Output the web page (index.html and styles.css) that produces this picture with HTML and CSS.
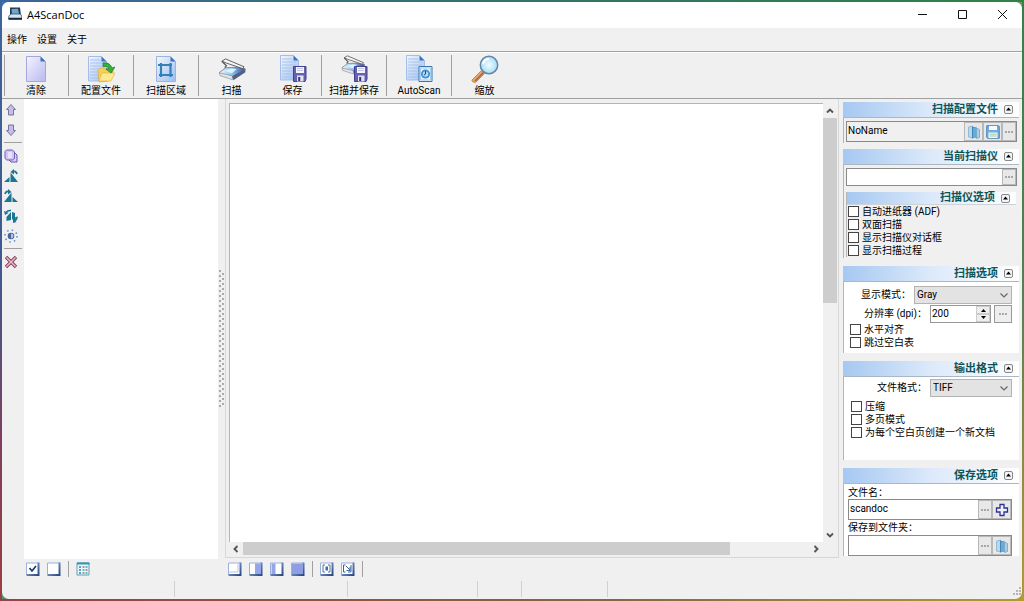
FILE: index.html
```html
<!DOCTYPE html>
<html lang="zh-CN">
<head>
<meta charset="utf-8">
<title>A4ScanDoc</title>
<link rel="stylesheet" href="styles.css">
</head>
<body>
<svg class="defs" aria-hidden="true">
  <defs>
    <linearGradient id="paper" x1="0" y1="0" x2="1" y2="1"><stop offset="0" stop-color="#f4f4ff"/><stop offset="1" stop-color="#b9b9f0"/></linearGradient>
    <linearGradient id="bluepaper" x1="0" y1="0" x2="1" y2="1"><stop offset="0" stop-color="#f3f7ff"/><stop offset="1" stop-color="#9cbdf0"/></linearGradient>
    <linearGradient id="glass" x1="0" y1="0" x2="1" y2="0"><stop offset="0" stop-color="#f5f7fa"/><stop offset=".45" stop-color="#8bcbee"/><stop offset="1" stop-color="#3d4e96"/></linearGradient>
    <linearGradient id="frame" x1="0" y1="0" x2="1" y2="1"><stop offset="0" stop-color="#a9bfe9"/><stop offset="1" stop-color="#2c4a86"/></linearGradient>
    <radialGradient id="lens"><stop offset="0" stop-color="#f2fcff"/><stop offset="1" stop-color="#a5def5"/></radialGradient>
    <symbol id="dots" viewBox="0 0 10 10"><path d="M1 5h2M4 5h2M7 5h2" stroke="#666" stroke-width="1" fill="none"/></symbol>
    <symbol id="chev" viewBox="0 0 10 10"><path d="M1.500 3.500l3.500 3.500 3.500-3.500" stroke="#666" stroke-width="1.200" fill="none"/></symbol>
    <symbol id="arrow" viewBox="0 0 10 10"><path d="M2 6.500l3-3 3 3" stroke="#555" stroke-width="1.900" fill="none"/></symbol>
    <symbol id="fold" viewBox="0 0 9 9"><rect x=".5" y=".5" width="8" height="8" rx="1.500" fill="#f2f4f8" stroke="#888"/><path d="M2 5.500l2.500-3 2.500 3z" fill="#000"/></symbol>
    <symbol id="folder" viewBox="0 0 14 14"><path d="M1.500 2l4-1v12l-4-1z" fill="#b8d8ee" stroke="#78a9cb" stroke-width=".7"/><path d="M5 1.500l4 1v10l-4 1z" fill="#3f86b9"/><path d="M6 3l3.500-1.500v11.500h-3.500z" fill="#6aabd6"/><path d="M9.500 3l3 1.500v8l-3 1z" fill="#a7d0e8" stroke="#5a91b8" stroke-width=".6"/></symbol>
    <symbol id="floppy" viewBox="0 0 14 14"><path d="M.7.700h12l.6.600v12h-11.800l-.8-.8z" fill="#72ace2" stroke="#5288bd"/><path d="M3 1h8v4h-8z" fill="#f4faff"/><path d="M2.500 7.500h9v5.500h-9z" fill="#eef8ef"/><path d="M3.500 9.200h7M3.500 11h7" stroke="#a5cba5"/></symbol>
    <symbol id="disk" viewBox="0 0 14 16"><path d="M.5.500h12.500v12.500l-1 2.500h-11.500z" fill="#6860b0" stroke="#453f8e"/><path d="M3 1h8v6h-8z" fill="#f5f6fd"/><path d="M4 2.500h6M4 4.500h6" stroke="#c0c5e1"/><path d="M4 9.500h6.500v6h-6.500z" fill="#dfe2f5"/><path d="M5.200 11h2v4h-2z" fill="#38327c"/></symbol>
    <symbol id="lined" viewBox="0 0 22 26"><path d="M1.500.500h13l5 5v19.500h-18z" fill="url(#bluepaper)" stroke="#a5bde8"/><path d="M14.500.500v5h5z" fill="#3976c1"/><path d="M3 4h10M3 7h14M3 10h14M3 13h14M3 16h14M3 19h14M3 22h14" stroke="#a9c3ec"/></symbol>
    <symbol id="scanner" viewBox="0 0 30 26"><path d="M1.500 15.500l7-5 16-.5 5 2-12.500 9.500-15-4.500z" fill="url(#glass)" stroke="#6a7085" stroke-width=".8"/><path d="M1.500 16l14 3.500v4l-13.500-4.500z" fill="#e4e4ea" stroke="#737380" stroke-width=".6"/><path d="M15.500 19.500l14-7.500v3.500l-13 8.500z" fill="#555e84"/><path d="M7 14l7-2.500 6 .5-5 4.500z" fill="#dff1fb"/><path d="M4 3.500l4-2.500 20 8.500-1.500 2-17.500-6z" fill="#f5f5f5" stroke="#56565a"/><path d="M4 3.500l5 5-2 2" fill="none" stroke="#56565a" stroke-width="1.300"/></symbol>
    <symbol id="slope" viewBox="0 0 14 14"><path d="M0 13l5.500-5v5zM6.500 13v-9.500l7.500 9.500z" fill="#1b7594"/><path d="M13 5c-.5-2.500-2.500-3-4.500-2.500" fill="none" stroke="#1b7594" stroke-width="1.700"/><path d="M6.500 3l3.500-3v5.500z" fill="#1b7594"/></symbol>
    <symbol id="tile" viewBox="0 0 14 14"><path d="M.5 1h12v11.500h-12z" fill="#fff" stroke="#9db0dd"/><path d="M12.500.500v12.500h-12" fill="none" stroke="url(#frame)" stroke-width="2"/></symbol>
  </defs>
</svg>

<div class="window">
  <header class="titlebar">
    <svg class="app-icon" viewBox="0 0 14 14"><path d="M2 .500h10l1 8h-11z" fill="#26384c"/><path d="M3.500 2l6.500-.3 1 5-7 .8z" fill="#69a8d1"/><path d="M.8 9l2-2h9.500l1.500 2v3h-13z" fill="#d6e4ee" stroke="#334f6a" stroke-width=".8"/><path d="M.5 10.800h13.500v1.900h-13.500z" fill="#122941"/></svg>
    <span class="title">A4ScanDoc</span>
    <button class="caption" aria-label="最小化"><svg viewBox="0 0 11 11"><path d="M1 5.500h9" stroke="#111"/></svg></button>
    <button class="caption" aria-label="最大化"><svg viewBox="0 0 11 11"><path d="M1.500 1.500h8v8h-8z" fill="none" stroke="#111"/></svg></button>
    <button class="caption" aria-label="关闭"><svg viewBox="0 0 11 11"><path d="M1 1l9 9M10 1l-9 9" stroke="#111"/></svg></button>
  </header>

  <nav class="menubar"><button>操作</button><button>设置</button><button>关于</button></nav>

  <div class="toolbar">
    <button class="tool sep"><svg viewBox="0 0 28 28"><path d="M4.500 1.500h14l5 5v20h-19z" fill="url(#paper)" stroke="#a6a6dd"/><path d="M18.500 1.500v5h5z" fill="#3976c1"/></svg>清除</button>
    <button class="tool sep"><svg viewBox="0 0 28 28"><use href="#lined" x="0" y="1" width="22" height="26"/><path d="M11 15l2-2h4l2 2h7v3l-4 8-10 1z" fill="#f5cf5a" stroke="#dba53d" stroke-width=".6"/><path d="M12 26l3-8h13l-4 8z" fill="#ffe98e" stroke="#dfb04b" stroke-width=".6"/><path d="M16 8q7-1 9 5l3-1-4 6-5-4 3-.5q-2-3-6-2z" fill="#37af3c" stroke="#167927" stroke-width=".7"/></svg>配置文件</button>
    <button class="tool sep"><svg viewBox="0 0 28 28"><path d="M4.500 1.500h14l5 5v20h-19z" fill="url(#bluepaper)" stroke="#9bb4de"/><path d="M18.500 1.500v5h5z" fill="#3976c1"/><path d="M9 8v14M6 10h14M7 20h14M18.500 8v14" stroke="#3581b5" stroke-width="2.200" fill="none"/></svg>扫描区域</button>
    <button class="tool"><svg viewBox="0 0 28 28"><use href="#scanner" x="0" y="3" width="28" height="24"/></svg>扫描</button>
    <button class="tool sep"><svg viewBox="0 0 28 28"><use href="#lined" x="0" y="0" width="22" height="26"/><use href="#disk" x="14" y="11" width="14" height="16"/></svg>保存</button>
    <button class="tool sep"><svg viewBox="0 0 28 28"><use href="#scanner" x="0" y="0" width="26" height="21"/><use href="#disk" x="14" y="11" width="14" height="16"/></svg>扫描并保存</button>
    <button class="tool sep"><svg viewBox="0 0 28 28"><use href="#lined" x="0" y="0" width="22" height="26"/><path d="M14 11.500h13v15h-13z" fill="#e8f4ff" stroke="#3875ae"/><path d="M15.500 13h10v12h-10z" fill="none" stroke="#a9cce9"/><circle cx="20.500" cy="19" r="4.500" fill="#448dce"/><circle cx="20.500" cy="19" r="2.800" fill="#aadbfa"/><path d="M20.500 16v3l-1.500 1" stroke="#174878" fill="none"/></svg>AutoScan</button>
    <button class="tool"><svg viewBox="0 0 28 28"><path d="M2 24l8.500-8.500 3 3-8.500 8.500q-2 1-3.500-.5t.5-2.500z" fill="#f3a650" stroke="#c98542"/><path d="M4 26l8.500-8.500" stroke="#8a6375" stroke-width="1.500"/><circle cx="18" cy="10" r="8.700" fill="url(#lens)" stroke="#6786a7" stroke-width="1.500"/><path d="M12 9q1-5 6-5" stroke="#fff" fill="none" stroke-width="2"/></svg>缩放</button>
  </div>

  <main class="main">
    <div class="sidebar-tools">
      <button aria-label="上移"><svg viewBox="0 0 14 14"><path d="M7 1.500l4.500 5h-2v5.500h-5v-5.500h-2z" fill="#c5bce9" stroke="#77739c"/></svg></button>
      <button aria-label="下移"><svg viewBox="0 0 14 14"><path d="M7 12.500l4.500-5h-2v-5.500h-5v5.500h-2z" fill="#c5bce9" stroke="#77739c"/></svg></button>
      <hr>
      <button aria-label="复制"><svg viewBox="0 0 14 14"><path d="M4.500 3.500h6l2.500 2.500v7h-6l-2.500-2.500z" fill="#d9cef7" stroke="#6955ac"/><path d="M2.500 1h6l2 2v6.500l-2 1.500h-6l-1.500-2v-6.500z" fill="#d1c6f3" stroke="#715dba"/><path d="M4 4h4M4 6h4M4 8h4" stroke="#fff"/></svg></button>
      <button aria-label="向左旋转"><svg viewBox="0 0 14 14"><use href="#slope" width="14" height="14"/></svg></button>
      <button aria-label="向右旋转"><svg viewBox="0 0 14 14"><use href="#slope" width="14" height="14" transform="translate(14 0) scale(-1 1)"/></svg></button>
      <button aria-label="旋转180度"><svg viewBox="0 0 14 14"><path d="M2.500 12v-4l4.500-5v8zM8 10v-7l3 1v4.500l3-1.500-4 5z" fill="#1b7594"/><path d="M7 1.500q-3-.5-5 2M13 8q0 3-3 4" fill="none" stroke="#1b7594" stroke-width="1.500"/><path d="M0 2l1 4 3.500-2zM9 10v4l3.500-1z" fill="#1b7594"/></svg></button>
      <button aria-label="亮度"><svg viewBox="0 0 14 14"><circle cx="7" cy="7" r="3.300" fill="#47649d"/><path d="M7 4.500a2.500 2.500 0 0 1 0 5z" fill="#b7c4e5"/><circle cx="7" cy="7" r="6" fill="none" stroke="#6c94d2" stroke-width="1.700" stroke-dasharray="1.500 3.212"/></svg></button>
      <hr>
      <button aria-label="删除"><svg viewBox="0 0 14 14"><path d="M2 2l10 10M12 2l-10 10" stroke="#7c3e60" stroke-width="3.400"/><path d="M2.500 2.500l9 9M11.500 2.500l-9 9" stroke="#eeb5c3" stroke-width="1.600"/></svg></button>
    </div>

    <section class="pages" aria-label="页面"></section>
    <div class="splitter"><span class="grip"></span></div>

    <section class="viewer">
      <div class="canvas"></div>
      <div class="vscroll">
        <button aria-label="向上滚动"><svg viewBox="0 0 10 10"><use href="#arrow"/></svg></button>
        <div class="track"><div class="thumb"></div></div>
        <button aria-label="向下滚动"><svg viewBox="0 0 10 10"><use href="#arrow" transform="rotate(180 5 5)"/></svg></button>
      </div>
      <div class="hscroll">
        <button aria-label="向左滚动"><svg viewBox="0 0 10 10"><use href="#arrow" transform="rotate(-90 5 5)"/></svg></button>
        <div class="track"><div class="thumb"></div></div>
        <button aria-label="向右滚动"><svg viewBox="0 0 10 10"><use href="#arrow" transform="rotate(90 5 5)"/></svg></button>
      </div>
    </section>

    <aside class="options">
      <section class="group profile">
        <h2>扫描配置文件<button class="fold" aria-label="折叠"><svg viewBox="0 0 9 9"><use href="#fold"/></svg></button></h2>
        <div class="body">
          <div class="field shade"><input type="text" value="NoName" aria-label="扫描配置文件"><button class="wide" aria-label="打开"><svg viewBox="0 0 14 14"><use href="#folder"/></svg></button><button class="wide" aria-label="保存"><svg viewBox="0 0 14 14"><use href="#floppy"/></svg></button><button class="more" aria-label="更多"><svg viewBox="0 0 10 10"><use href="#dots"/></svg></button></div>
        </div>
      </section>

      <section class="group device">
        <h2>当前扫描仪<button class="fold" aria-label="折叠"><svg viewBox="0 0 9 9"><use href="#fold"/></svg></button></h2>
        <div class="body">
          <div class="field low"><input type="text" aria-label="当前扫描仪"><button class="more" aria-label="选择"><svg viewBox="0 0 10 10"><use href="#dots"/></svg></button></div>
          <div class="nested">
            <h2>扫描仪选项<button class="fold" aria-label="折叠"><svg viewBox="0 0 9 9"><use href="#fold"/></svg></button></h2>
            <label class="check"><input type="checkbox">自动进纸器 (ADF)</label>
            <label class="check"><input type="checkbox">双面扫描</label>
            <label class="check"><input type="checkbox">显示扫描仪对话框</label>
            <label class="check"><input type="checkbox">显示扫描过程</label>
          </div>
        </div>
      </section>

      <section class="group scan">
        <h2>扫描选项<button class="fold" aria-label="折叠"><svg viewBox="0 0 9 9"><use href="#fold"/></svg></button></h2>
        <div class="body">
          <div class="row"><label for="mode">显示模式：</label><span class="combo mode"><select id="mode"><option>Gray</option></select><svg viewBox="0 0 10 10"><use href="#chev"/></svg></span></div>
          <div class="row"><label for="dpi">分辨率 (dpi)：</label><span class="spin"><input id="dpi" type="text" value="200"><span class="steps"><button aria-label="增加"><svg viewBox="0 0 7 4"><path d="M1 4l2.500-3 2.500 3z" fill="#000"/></svg></button><button aria-label="减少"><svg viewBox="0 0 7 4"><path d="M1 0l2.500 3 2.500-3z" fill="#000"/></svg></button></span></span><button class="dpi-more" aria-label="更多"><svg viewBox="0 0 10 10"><use href="#dots"/></svg></button></div>
          <label class="check"><input type="checkbox">水平对齐</label>
          <label class="check"><input type="checkbox">跳过空白表</label>
        </div>
      </section>

      <section class="group output">
        <h2>输出格式<button class="fold" aria-label="折叠"><svg viewBox="0 0 9 9"><use href="#fold"/></svg></button></h2>
        <div class="body">
          <div class="row"><label for="format">文件格式：</label><span class="combo format"><select id="format"><option>TIFF</option></select><svg viewBox="0 0 10 10"><use href="#chev"/></svg></span></div>
          <label class="check"><input type="checkbox">压缩</label>
          <label class="check"><input type="checkbox">多页模式</label>
          <label class="check"><input type="checkbox">为每个空白页创建一个新文档</label>
        </div>
      </section>

      <section class="group save">
        <h2>保存选项<button class="fold" aria-label="折叠"><svg viewBox="0 0 9 9"><use href="#fold"/></svg></button></h2>
        <div class="body">
          <label class="caption-text" for="fname">文件名：</label>
          <div class="field"><input id="fname" type="text" value="scandoc"><button class="more" aria-label="更多"><svg viewBox="0 0 10 10"><use href="#dots"/></svg></button><button class="wide" aria-label="添加"><svg viewBox="0 0 14 14"><path d="M5 1.500h4v3.500h3.500v4h-3.500v3.500h-4v-3.500h-3.500v-4h3.500z" fill="#eef1ff" stroke="#2e3192" stroke-width="1.300"/></svg></button></div>
          <label class="caption-text" for="dir">保存到文件夹：</label>
          <div class="field"><input id="dir" type="text"><button class="more" aria-label="浏览"><svg viewBox="0 0 10 10"><use href="#dots"/></svg></button><button class="wide" aria-label="打开文件夹"><svg viewBox="0 0 14 14"><use href="#folder"/></svg></button></div>
        </div>
      </section>
    </aside>
  </main>

  <div class="bottombar">
    <div class="tiles pages-tiles">
      <button aria-label="全选"><svg viewBox="0 0 14 14"><use href="#tile"/><path d="M3.500 6l2.500 3 4-5" fill="none" stroke="#173a68" stroke-width="1.700"/></svg></button>
      <button aria-label="取消全选"><svg viewBox="0 0 14 14"><use href="#tile"/></svg></button>
      <i class="bar"></i>
      <button aria-label="缩略图"><svg viewBox="0 0 14 14"><path d="M1 1h12v12h-12z" fill="#e8f8fc" stroke="#5e9eb9"/><path d="M1 1.500h12.500" stroke="#3793ae" stroke-width="2"/><path d="M3 5h2M3 8h2M3 11h2" stroke="#3779b8" stroke-width="1.500"/><path d="M6.500 5h2M9.500 8h2M6.500 11h2" stroke="#b46972" stroke-width="1.500"/><path d="M9.500 5h2M6.500 8h2M9.500 11h2" stroke="#3caa9d" stroke-width="1.500"/></svg></button>
    </div>
    <div class="tiles">
      <button aria-label="单页"><svg viewBox="0 0 14 14"><use href="#tile"/><path d="M1 10h9v-8" fill="none" stroke="#b8c7e8"/></svg></button>
      <button aria-label="右半页"><svg viewBox="0 0 14 14"><use href="#tile"/><path d="M6 1.500h6v10.500h-6z" fill="#95a5e6"/></svg></button>
      <button aria-label="左半页"><svg viewBox="0 0 14 14"><use href="#tile"/><path d="M1.500 1.500h4v10.500h-4z" fill="#95a5e6"/></svg></button>
      <button aria-label="整页"><svg viewBox="0 0 14 14"><use href="#tile"/><path d="M1 1.500h11v10.500h-11z" fill="#8d9fe2"/></svg></button>
      <i class="bar"></i>
      <button aria-label="适合页面"><svg viewBox="0 0 14 14"><use href="#tile"/><path d="M5 3h-2v7h2M8 3h2v7h-2" fill="none" stroke="#4774a9"/><path d="M5.500 4.500h2.500v4h-2.500z" fill="#3f6ca6"/></svg></button>
      <button aria-label="适合宽度"><svg viewBox="0 0 14 14"><use href="#tile"/><path d="M2.500 3h2M2.500 3v7h2M10 3v7h-3M5 4l4 4M9 5v3.500h-3.500" fill="none" stroke="#37649d"/></svg></button>
      <i class="bar"></i>
    </div>
  </div>

  <footer class="statusbar"><span></span><span></span><span></span><span></span><span></span><svg viewBox="0 0 10 10"><path d="M7 1h2M4 4h2M7 4h2M1 7h2M4 7h2M7 7h2" stroke="#b5b5b5" stroke-width="2"/></svg></footer>
</div>
</body>
</html>
```

FILE: styles.css
```css
* { box-sizing: border-box; }

body {
  margin: 0;
  min-height: 100vh;
  padding: 2px;
  display: flex;
  background: linear-gradient(90deg, #3d659c, #357269 50%, #2f8247) top / 100% 2px no-repeat,
    linear-gradient(90deg, #9b3f43, #876544 60%, #b29b31) bottom / 100% 2px no-repeat,
    linear-gradient(#3d659c, #40598f 45%, #803e5b 75%, #9b3f43) left / 2px 100% no-repeat,
    linear-gradient(#2f8247, #548053 50%, #8f8e3d 80%, #b29b31) right / 2px 100% no-repeat,
    linear-gradient(135deg, #3d77c2, #54a05c 50%, #b29b31);
  font-family: Roboto, "Noto Sans CJK SC", sans-serif;
  font-size: 10px;
  line-height: 13px;
  color: #000;
}

button, input, select { font: inherit; color: inherit; margin: 0; padding: 0; border: 0; background: none; border-radius: 0; }
button { display: flex; align-items: center; justify-content: center; }
.defs { position: absolute; width: 0; height: 0; }

.window { flex: 1; min-width: 0; display: flex; flex-direction: column; background: #f0f0f0; border-radius: 7px; overflow: hidden; }

.titlebar { height: 26px; display: flex; align-items: center; padding: 0 0 2px 6px; background: #fff; }
.app-icon { width: 14px; height: 14px; }
.title { flex: 1; padding-left: 5px; font-family: "Open Sans", sans-serif; font-size: 11px; }
.caption { width: 40px; height: 24px; }
.caption svg { width: 11px; height: 11px; }

.menubar { height: 24px; display: flex; align-items: center; gap: 10px; padding-left: 5px; border-bottom: 1px solid #a0a0a0; }

.toolbar { height: 47px; display: flex; padding: 2px 0 2px 2px; border-bottom: 1px solid #a0a0a0; border-top: 1px solid #fff; }
.toolbar::before { content: ""; width: 1px; margin-right: -1px; background: #a0a0a0; }
.tool { flex-direction: column; justify-content: flex-start; width: 65px; white-space: nowrap; }
.tool svg { width: 28px; height: 28px; margin-bottom: 1px; flex: none; }
.tool.sep { border-right: 1px solid #a0a0a0; }
.tool:nth-child(5) { width: 58px; }

.main { flex: 1; display: flex; min-height: 0; }

.sidebar-tools { width: 22px; padding: 1px 2px; }
.sidebar-tools button { width: 14px; height: 20px; }
.sidebar-tools svg { width: 14px; height: 14px; }
.sidebar-tools hr { margin: 2px 0 3px; border: 0; border-top: 1px solid #a0a0a0; }

.pages { width: 194px; background: #fff; }

.splitter { width: 7px; display: flex; align-items: center; justify-content: center; }
.grip {
  width: 5px; height: 138px; margin-top: 20px;
  background: radial-gradient(circle at 1px 1px, #aaa 1px, transparent 1px) 0 0 / 5px 5px,
    radial-gradient(circle at 1px 1px, #aaa 1px, transparent 1px) 3px 3px / 5px 5px;
}

.viewer {
  flex: 1; min-width: 0; display: grid; margin-bottom: 1px; padding: 4px 1px 1px 3px;
  grid-template-columns: 1fr 14px; grid-template-rows: 1fr 14px;
  border: 1px solid #d8d8d8; border-top: 0; background: #f0f0f0;
}
.canvas { background: #fff; border: 1px solid #b4b4b4; border-right: 0; border-bottom: 0; }
.vscroll { display: flex; flex-direction: column; padding-top: 1px; }
.vscroll button, .hscroll button { width: 14px; height: 14px; flex: none; }
.vscroll svg, .hscroll svg { width: 10px; height: 10px; }
.hscroll { display: flex; }
.track { flex: 1; }
.thumb { background: #cdcdcd; }
.vscroll .thumb { height: 45%; }
.hscroll .thumb { width: 86%; height: 13px; }

.options { width: 183px; padding: 3px 3px 3px 4px; display: flex; flex-direction: column; gap: 8px; }
h2 {
  margin: 0; height: 16px; padding: 0 6px; display: flex; align-items: center; justify-content: flex-end; gap: 6px;
  background: linear-gradient(90deg, #a6c8f1, #dce9fa 50%, #fff); border-bottom: 1px solid #a9b8c2;
  font-size: 11px; line-height: 14px; font-weight: 700; color: #0b5558;
}
.fold, .fold svg { width: 9px; height: 9px; }
.body { background: #fff; border-left: 1px solid #b5b5b5; }
.profile .body { padding: 3px 2px 1px; background: #f0f0f0; }
.profile { margin-bottom: -2px; }
.device .body { padding: 3px 2px 1px; background: #f0f0f0; }

.field { display: flex; height: 21px; border: 1px solid #8a8a8a; background: #fff; }
.field.shade { background: #f0f0f0; }
.field.low { height: 18px; }
.field input { flex: 1; min-width: 0; padding: 0 1px 3px; }
.field button { background: #e8e8e8; border: 1px solid #b8b8b8; }
.more { width: 14px; }
.more svg { width: 10px; height: 10px; flex: none; }
.wide { width: 19px; }
.wide svg { width: 14px; height: 14px; flex: none; }

.nested { margin: 6px 1px 0 0; border-left: 1px solid #b5b5b5; }
.nested h2 { height: 13px; line-height: 12px; border-bottom-color: #ccd4da; }

.check { display: flex; align-items: center; gap: 3px; height: 13px; padding-left: 1px; white-space: nowrap; }
.check input { appearance: none; width: 11px; height: 11px; background: #fff; border: 1px solid #444; }

.row { display: flex; align-items: center; justify-content: flex-end; height: 19px; }
.row label { margin-right: 3px; }
.combo { position: relative; height: 18px; }
.combo select { width: 100%; height: 100%; padding-left: 2px; appearance: none; background: #e3e3e3; border: 1px solid #b3b3b3; }
.combo svg { position: absolute; right: 3px; top: 4px; width: 10px; height: 10px; pointer-events: none; }
.mode { width: 98px; }
.format { width: 82px; }
.spin { width: 61px; height: 18px; display: flex; border: 1px solid #999; background: #fff; }
.spin input { flex: 1; min-width: 0; padding-left: 1px; }
.steps { width: 14px; display: flex; flex-direction: column; }
.steps button { flex: 1; background: #eee; border: 1px solid #ccc; }
.steps svg { width: 7px; height: 4px; }
.dpi-more { width: 18px; height: 18px; margin-left: 3px; background: #eee; border: 1px solid #999; }
.dpi-more svg { width: 10px; height: 10px; }

.scan .body { padding: 3px 7px 4px 5px; }
.output .body { padding: 1px 7px 21px 6px; }
.output .row { margin-bottom: 3px; }
.save .body { padding: 2px 7px 0 4px; }
.caption-text { display: block; height: 13px; }
.save .field + .caption-text { height: 15px; padding-top: 1px; }

.bottombar { height: 22px; display: flex; align-items: center; padding: 0 0 2px 24px; }
.pages-tiles { width: 202px; }
.tiles { display: flex; align-items: center; gap: 7px; }
.tiles button, .tiles svg { width: 14px; height: 14px; }
.bar { width: 1px; height: 16px; background: #a0a0a0; }

.statusbar { height: 18px; display: flex; align-items: center; padding-bottom: 2px; }
.statusbar span { height: 16px; border-right: 1px solid #d0d0d0; flex: 0 0 173px; }
.statusbar span:nth-child(3) { flex-basis: 130px; }
.statusbar span:nth-child(4) { flex-basis: 44px; }
.statusbar span:nth-child(5) { flex-basis: 86px; }
.statusbar svg { width: 10px; height: 10px; margin-left: auto; align-self: flex-end; }
```
